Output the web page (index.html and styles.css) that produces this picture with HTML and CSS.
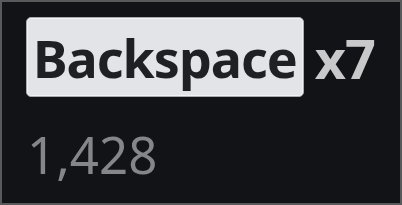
FILE: index.html
```html
<!DOCTYPE html>
<html lang="en">
<head>
    <meta charset="UTF-8">
    <title>Key Count</title>
    <link rel="stylesheet" href="styles.css">
</head>
<body>
    <div class="frame">
        <div class="key-row">
            <span class="key">Backspace</span>
            <span class="count">x7</span>
        </div>
        <div class="total">1,428</div>
    </div>
</body>
</html>
```

FILE: styles.css
```css
html, body {
    margin: 0;
    padding: 0;
}

body {
    font-family: "Noto Sans", "Open Sans", sans-serif;
    background: #121316;
}

.frame {
    box-sizing: border-box;
    width: 402px;
    height: 205px;
    border: 2px solid #58595b;
    background: #121316;
    padding: 15px 0 0 24px;
}

.key-row {
    display: flex;
    align-items: center;
    gap: 11px;
}

.key {
    display: inline-block;
    box-sizing: border-box;
    height: 80px;
    line-height: 80px;
    padding: 0 6px;
    background: #e3e4e8;
    border: 1px solid #a9aaae;
    box-shadow: inset 0 0 0 1px #f2f2f4;
    border-radius: 5px;
    color: #1f2024;
    font-size: 52px;
    font-weight: bold;
    letter-spacing: -1px;
}

.count {
    padding-top: 2px;
    color: #c9c9cb;
    font-size: 54px;
    font-weight: bold;
    letter-spacing: -1px;
}

.total {
    margin-top: 29px;
    padding-left: 1px;
    color: #85868a;
    font-size: 51px;
    line-height: 56px;
}
```
